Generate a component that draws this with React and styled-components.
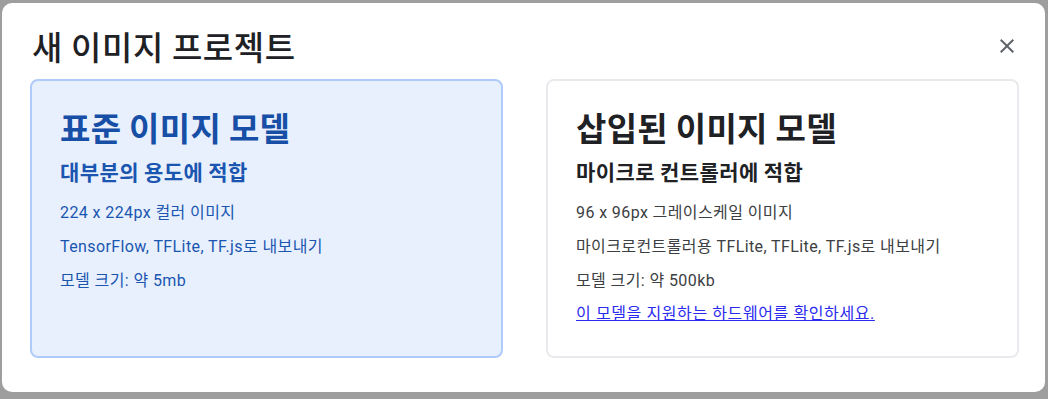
import React from "react";
import styled, { createGlobalStyle } from "styled-components";

const Global = createGlobalStyle`
  html, body { margin: 0; padding: 0; }
  body {
    background: #9c9c9c;
    font-family: Roboto, "Noto Sans CJK KR", sans-serif;
  }
`;

const Backdrop = styled.div`
  width: 1048px;
  height: 399px;
  box-sizing: border-box;
  padding: 3px 3px 7px 2px;
  background: #9e9e9e;
`;

const Dialog = styled.div`
  height: 100%;
  box-sizing: border-box;
  background: #fff;
  border-radius: 10px;
  display: flex;
  flex-direction: column;
  padding: 0 26px 0 28px;
`;

const Header = styled.div`
  height: 76px;
  display: flex;
  align-items: center;
  justify-content: space-between;
  padding-left: 2px;
`;

const Title = styled.h1`
  margin: 0;
  margin-top: 10px;
  font-family: "Noto Sans CJK KR", sans-serif;
  font-size: 33px;
  font-weight: 500;
  color: #202124;
  letter-spacing: 0.6px;
`;

const CloseButton = styled.button`
  border: 0;
  background: transparent;
  padding: 0;
  width: 24px;
  height: 24px;
  margin-top: 10px;
  color: #5f6368;
  cursor: pointer;
  display: flex;
`;

const Cards = styled.div`
  display: grid;
  grid-template-columns: 1fr 1fr;
  gap: 43px;
`;

const Card = styled.div`
  height: 279px;
  box-sizing: border-box;
  border-radius: 8px;
  border: 2px solid ${(p) => (p.$selected ? "#aecbfa" : "#e8eaed")};
  background: ${(p) => (p.$selected ? "#e8f0fe" : "#fff")};
  padding: 22px 28px 0 28px;
  color: ${(p) => (p.$selected ? "#1a56b0" : "#3c4043")};
  display: flex;
  flex-direction: column;
`;

const CardTitle = styled.h2`
  margin: 0;
  font-family: "Noto Sans CJK KR", sans-serif;
  font-size: 33px;
  line-height: 48px;
  font-weight: 700;
  letter-spacing: 0.3px;
  color: ${(p) => (p.$selected ? "#174ea6" : "#202124")};
`;

const CardSubtitle = styled.h3`
  margin: 0;
  margin-top: 5px;
  font-family: "Noto Sans CJK KR", sans-serif;
  font-size: 21px;
  line-height: 30px;
  font-weight: 700;
  letter-spacing: 0.4px;
  color: ${(p) => (p.$selected ? "#1a56b0" : "#202124")};
`;

const Lines = styled.div`
  margin-top: 10px;
  display: flex;
  flex-direction: column;
`;

const Line = styled.div`
  font-size: 16px;
  line-height: 34px;
  letter-spacing: 0.4px;
  white-space: nowrap;
`;

const HwLink = styled.a`
  font-size: 16px;
  line-height: 32px;
  letter-spacing: 0.6px;
  color: #2b2bf0;
  text-decoration: underline;
  white-space: nowrap;
`;

function CloseIcon() {
  return (
    <svg width="24" height="24" viewBox="0 0 24 24" fill="currentColor">
      <path d="M19 6.41L17.59 5 12 10.59 6.41 5 5 6.41 10.59 12 5 17.59 6.41 19 12 13.41 17.59 19 19 17.59 13.41 12z" />
    </svg>
  );
}

export default function App() {
  return (
    <>
      <Global />
      <Backdrop>
        <Dialog>
          <Header>
            <Title>새 이미지 프로젝트</Title>
            <CloseButton aria-label="닫기">
              <CloseIcon />
            </CloseButton>
          </Header>
          <Cards>
            <Card $selected>
              <CardTitle $selected>표준 이미지 모델</CardTitle>
              <CardSubtitle $selected>대부분의 용도에 적합</CardSubtitle>
              <Lines>
                <Line>224 x 224px 컬러 이미지</Line>
                <Line>TensorFlow, TFLite, TF.js로 내보내기</Line>
                <Line>모델 크기: 약 5mb</Line>
              </Lines>
            </Card>
            <Card>
              <CardTitle>삽입된 이미지 모델</CardTitle>
              <CardSubtitle>마이크로 컨트롤러에 적합</CardSubtitle>
              <Lines>
                <Line>96 x 96px 그레이스케일 이미지</Line>
                <Line>마이크로컨트롤러용 TFLite, TFLite, TF.js로 내보내기</Line>
                <Line>모델 크기: 약 500kb</Line>
                <HwLink href="#">이 모델을 지원하는 하드웨어를 확인하세요.</HwLink>
              </Lines>
            </Card>
          </Cards>
        </Dialog>
      </Backdrop>
    </>
  );
}
